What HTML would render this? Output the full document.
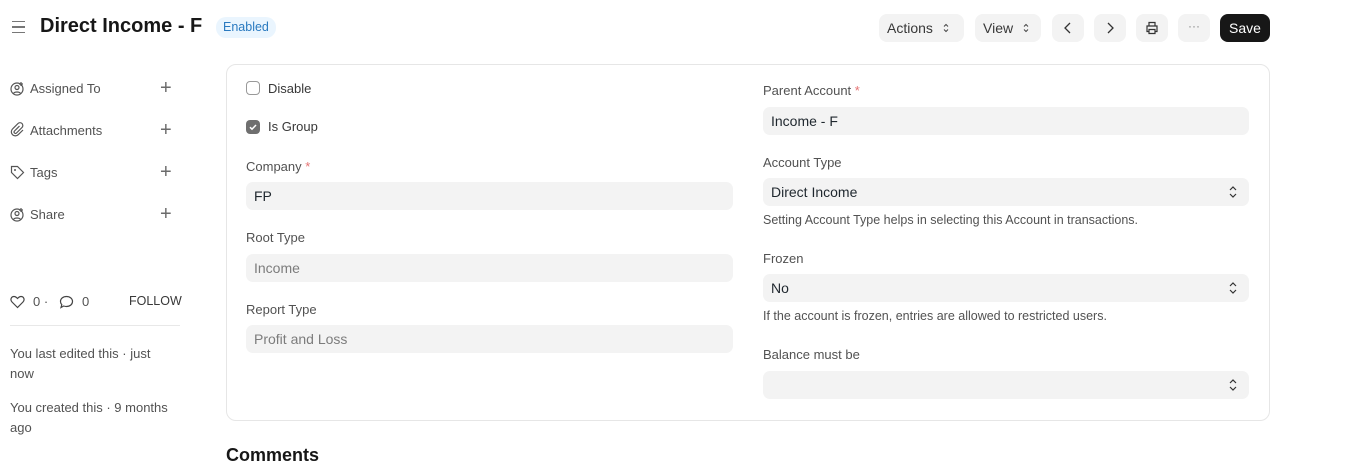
<!DOCTYPE html><html><head><style>
*{box-sizing:border-box;margin:0;padding:0}
body{width:1354px;height:453px;overflow:hidden;background:#fff;font-family:"Liberation Sans",sans-serif;color:#1f272e;position:relative}
.a{position:absolute;white-space:nowrap}
.lbl{font-size:13px;color:#525252}
.inp{position:absolute;height:28px;background:#f3f3f3;border-radius:7px;font-size:14px;padding:0 8px;line-height:28px;color:#1f272e}
.ro{color:#7c7c7c}
.btn{position:absolute;top:14px;height:28px;background:#f3f3f3;border-radius:8px;font-size:14px;line-height:28px;text-align:center;color:#383838}
.side{font-size:13px;color:#525252}
.plus{font-size:20px;color:#6b6b6b;font-weight:300}
.ud{position:absolute;right:12px;top:8px;width:8px;height:12px}
.help{font-size:12.5px;color:#525252}
</style></head><body>
<div class="a" style="left:12px;top:21px;width:13px">
<div style="height:1.3px;background:#777;margin-bottom:4px"></div><div style="height:1.3px;background:#777;margin-bottom:4px"></div><div style="height:1.3px;background:#777"></div></div>
<div class="a" style="left:40px;top:15px;font-size:20px;font-weight:bold;color:#171717">Direct Income - F</div>
<div class="a" style="left:216px;top:17px;height:21px;padding:0 7px;background:#eaf5fe;color:#2a7ac0;border-radius:10px;font-size:12.5px;line-height:21px">Enabled</div>

<div class="btn" style="left:879px;width:85px;text-align:left;padding-left:8px">Actions <svg width="6" height="10" viewBox="0 0 6 10" style="margin-left:6px"><path d="M1 3.5l2-2 2 2M1 6.5l2 2 2-2" stroke="#444" fill="none" stroke-width="1"/></svg></div>
<div class="btn" style="left:975px;width:66px;text-align:left;padding-left:8px">View <svg width="6" height="10" viewBox="0 0 6 10" style="margin-left:6px"><path d="M1 3.5l2-2 2 2M1 6.5l2 2 2-2" stroke="#444" fill="none" stroke-width="1"/></svg></div>
<div class="btn" style="left:1052px;width:32px"><svg width="10" height="12" viewBox="0 0 10 12" style="margin-top:8px"><path d="M7 1L2 6l5 5" stroke="#333" fill="none" stroke-width="1.3"/></svg></div>
<div class="btn" style="left:1094px;width:32px"><svg width="10" height="12" viewBox="0 0 10 12" style="margin-top:8px"><path d="M3 1l5 5-5 5" stroke="#333" fill="none" stroke-width="1.3"/></svg></div>
<div class="btn" style="left:1136px;width:32px"><svg width="14" height="14" viewBox="0 0 14 14" style="margin-top:7px"><path d="M4 5V1.5h6V5M3.5 10.5H2V5h10v5.5h-1.5M4 8.5h6v4H4z" stroke="#333" fill="none" stroke-width="1.2"/></svg></div>
<div class="btn" style="left:1178px;width:32px;color:#888;font-size:12px;line-height:24px">···</div>
<div class="btn" style="left:1220px;width:50px;background:#171717;color:#fff">Save</div>

<svg class="a" style="left:10px;top:81px" width="15" height="15" viewBox="0 0 15 15"><circle cx="7" cy="8" r="6" stroke="#555" fill="none" stroke-width="1.2"/><circle cx="7" cy="6.5" r="2" stroke="#555" fill="none" stroke-width="1.2"/><path d="M3.5 12.5c1-2 6-2 7 0M11 1v4M9 3h4" stroke="#555" fill="none" stroke-width="1.2"/></svg>
<div class="a side" style="left:30px;top:81px">Assigned To</div><div class="a plus" style="left:160px;top:77px">+</div>
<svg class="a" style="left:10px;top:122px" width="15" height="15" viewBox="0 0 15 15"><path d="M9.5 4L4.5 9a1.4 1.4 0 002 2l5.5-5.5a2.8 2.8 0 00-4-4L2.5 7a4 4 0 005.7 5.7L13 8" stroke="#555" fill="none" stroke-width="1.2"/></svg>
<div class="a side" style="left:30px;top:123px">Attachments</div><div class="a plus" style="left:160px;top:119px">+</div>
<svg class="a" style="left:10px;top:165px" width="15" height="15" viewBox="0 0 15 15"><path d="M1.5 1.5h6l6 6-6 6-6-6z" stroke="#555" fill="none" stroke-width="1.2"/><circle cx="5" cy="5" r="1" fill="#555"/></svg>
<div class="a side" style="left:30px;top:165px">Tags</div><div class="a plus" style="left:160px;top:161px">+</div>
<svg class="a" style="left:10px;top:207px" width="15" height="15" viewBox="0 0 15 15"><circle cx="7" cy="8" r="6" stroke="#555" fill="none" stroke-width="1.2"/><circle cx="7" cy="6.5" r="2" stroke="#555" fill="none" stroke-width="1.2"/><path d="M3.5 12.5c1-2 6-2 7 0M11 1v4M9 3h4" stroke="#555" fill="none" stroke-width="1.2"/></svg>
<div class="a side" style="left:30px;top:207px">Share</div><div class="a plus" style="left:160px;top:203px">+</div>

<svg class="a" style="left:10px;top:295px" width="15" height="14" viewBox="0 0 15 14"><path d="M7.5 12.5L2 7C0 5 1 1.5 4 1.5c1.6 0 2.6 1 3.5 2 .9-1 1.9-2 3.5-2 3 0 4 3.5 2 5.5z" stroke="#444" fill="none" stroke-width="1.2"/></svg>
<div class="a side" style="left:33px;top:294px">0 · </div>
<svg class="a" style="left:59px;top:295px" width="15" height="14" viewBox="0 0 15 14"><path d="M7.5 1.5c3.3 0 6 2 6 5s-2.7 5-6 5c-1 0-2-.2-2.8-.5L2 12.5l.8-2.8C1.9 8.8 1.5 7.7 1.5 6.5c0-3 2.7-5 6-5z" stroke="#444" fill="none" stroke-width="1.2"/></svg>
<div class="a side" style="left:82px;top:294px">0</div>
<div class="a" style="left:129px;top:294px;font-size:12.5px;color:#383838">FOLLOW</div>
<div class="a" style="left:10px;top:325px;width:170px;height:1px;background:#e8e8e8"></div>
<div class="a side" style="left:10px;top:344px;line-height:20px;white-space:normal;width:160px">You last edited this · just now</div>
<div class="a side" style="left:10px;top:398px;line-height:20px;white-space:normal;width:172px">You created this · 9 months ago</div>

<div class="a" style="left:226px;top:64px;width:1044px;height:357px;border:1px solid #e6e6e6;border-radius:10px"></div>
<div class="a" style="left:246px;top:81px;width:14px;height:14px;border:1px solid #999;border-radius:4px"></div>
<div class="a lbl" style="left:268px;top:81px;color:#383838">Disable</div>
<div class="a" style="left:246px;top:120px;width:14px;height:14px;background:#6f6f6f;border-radius:4px"><svg width="14" height="14" viewBox="0 0 14 14" style="display:block"><path d="M4 7.2l2 2 4-4.2" stroke="#fff" fill="none" stroke-width="1.5"/></svg></div>
<div class="a lbl" style="left:268px;top:119px;color:#383838">Is Group</div>

<div class="a lbl" style="left:246px;top:159px">Company <span style="color:#e57373">*</span></div>
<div class="inp" style="left:246px;top:182px;width:487px">FP</div>
<div class="a lbl" style="left:246px;top:230px">Root Type</div>
<div class="inp ro" style="left:246px;top:254px;width:487px">Income</div>
<div class="a lbl" style="left:246px;top:302px">Report Type</div>
<div class="inp ro" style="left:246px;top:325px;width:487px">Profit and Loss</div>

<div class="a lbl" style="left:763px;top:83px">Parent Account <span style="color:#e57373">*</span></div>
<div class="inp" style="left:763px;top:107px;width:486px">Income - F</div>
<div class="a lbl" style="left:763px;top:155px">Account Type</div>
<div class="inp" style="left:763px;top:178px;width:486px">Direct Income<svg class="ud" viewBox="0 0 8 12"><path d="M1 4l3-3 3 3M1 8l3 3 3-3" stroke="#333" fill="none" stroke-width="1.2"/></svg></div>
<div class="a help" style="left:763px;top:213px">Setting Account Type helps in selecting this Account in transactions.</div>
<div class="a lbl" style="left:763px;top:251px">Frozen</div>
<div class="inp" style="left:763px;top:274px;width:486px">No<svg class="ud" viewBox="0 0 8 12"><path d="M1 4l3-3 3 3M1 8l3 3 3-3" stroke="#333" fill="none" stroke-width="1.2"/></svg></div>
<div class="a help" style="left:763px;top:309px">If the account is frozen, entries are allowed to restricted users.</div>
<div class="a lbl" style="left:763px;top:347px">Balance must be</div>
<div class="inp" style="left:763px;top:371px;width:486px"><svg class="ud" viewBox="0 0 8 12"><path d="M1 4l3-3 3 3M1 8l3 3 3-3" stroke="#333" fill="none" stroke-width="1.2"/></svg></div>

<div class="a" style="left:226px;top:445px;font-size:18px;font-weight:bold;color:#171717">Comments</div>
</body></html>
